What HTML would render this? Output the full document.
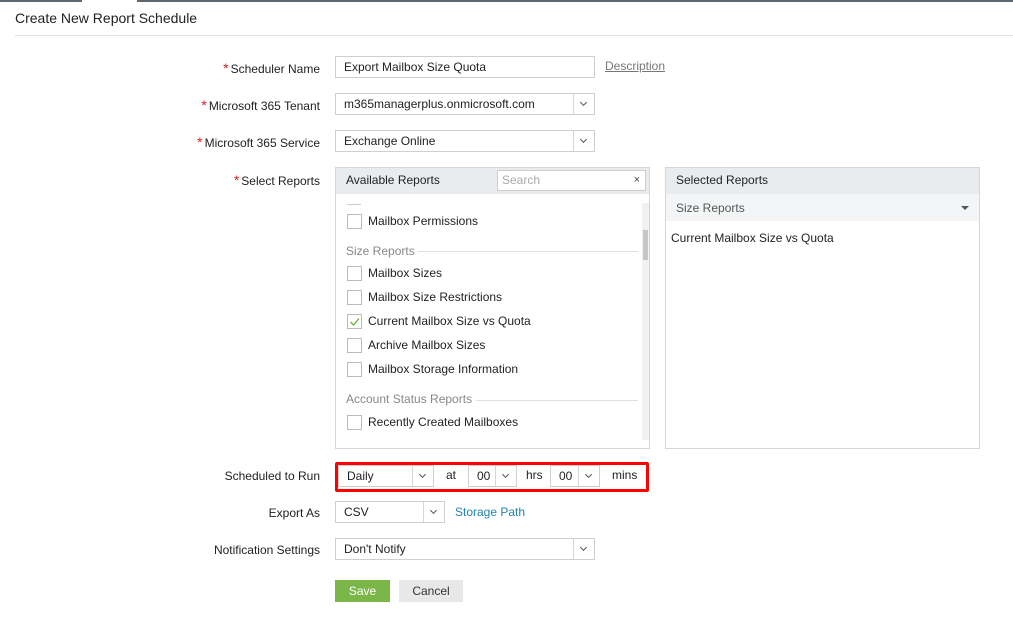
<!DOCTYPE html>
<html><head><style>
*{box-sizing:border-box;margin:0;padding:0}
body{width:1013px;height:629px;background:#fff;font-family:"Liberation Sans",sans-serif;font-size:12px;color:#222;position:relative;overflow:hidden}
.a{position:absolute}
.lbl{position:absolute;right:693px;white-space:nowrap;font-size:12px}
.lbl b{color:#e21b1b;font-weight:normal;font-size:14px;margin-right:2px}
.box{position:absolute;border:1px solid #cfcfcf;background:#fff;padding-left:8px;line-height:20px;font-size:12px}
.arr{position:absolute;right:0;top:0;bottom:0;width:21px;border-left:1px solid #d6d6d6}
.arr:after{content:"";position:absolute;left:7px;top:6px;width:4px;height:4px;border-right:1.3px solid #555;border-bottom:1.3px solid #555;transform:rotate(45deg)}
.cb{position:absolute;left:347px;width:15px;height:15px;border:1px solid #bbb;background:#fff}
.it{position:absolute;left:368px;font-size:12px}
.grp{position:absolute;left:346px;color:#888;font-size:12px}
</style></head><body>
<div class="a" style="left:0;top:0;width:82px;height:2px;background:#5c6770"></div>
<div class="a" style="left:137px;top:0;width:876px;height:2px;background:#5c6770"></div>
<div class="a" style="left:15px;top:10px;font-size:14px;color:#222">Create New Report Schedule</div>
<div class="a" style="left:15px;top:35px;width:998px;height:1px;background:#e3e3e3"></div>

<div class="lbl" style="top:60px"><b>*</b>Scheduler Name</div>
<div class="box" style="left:335px;top:56px;width:260px;height:22px">Export Mailbox Size Quota</div>
<div class="a" style="left:605px;top:59px;color:#777;text-decoration:underline;font-size:12px">Description</div>

<div class="lbl" style="top:97px"><b>*</b>Microsoft 365 Tenant</div>
<div class="box" style="left:335px;top:93px;width:260px;height:22px">m365managerplus.onmicrosoft.com<div class="arr"></div></div>

<div class="lbl" style="top:134px"><b>*</b>Microsoft 365 Service</div>
<div class="box" style="left:335px;top:130px;width:260px;height:22px">Exchange Online<div class="arr"></div></div>

<div class="lbl" style="top:172px"><b>*</b>Select Reports</div>

<div class="a" style="left:335px;top:167px;width:315px;height:282px;border:1px solid #d6d6d6"></div>
<div class="a" style="left:336px;top:168px;width:313px;height:26px;background:#e9ecef"></div>
<div class="a" style="left:346px;top:173px;font-size:12px">Available Reports</div>
<div class="a" style="left:497px;top:170px;width:149px;height:21px;border:1px solid #ccc;background:#fff;color:#aaa;padding-left:4px;line-height:19px">Search<span style="position:absolute;right:5px;color:#444;font-size:11px">×</span></div>
<div class="a" style="left:642px;top:203px;width:7px;height:237px;background:#f1f1f1"></div>
<div class="a" style="left:643px;top:230px;width:5px;height:30px;background:#c6c6c6"></div>
<div class="a" style="left:347px;top:204px;width:14px;height:1px;background:#ccc"></div>
<div class="cb" style="top:214px"></div><div class="it" style="top:214px">Mailbox Permissions</div>
<div class="grp" style="top:244px">Size Reports</div><div class="a" style="left:418px;top:251px;width:220px;height:1px;background:#e0e0e0"></div>
<div class="cb" style="top:266px"></div><div class="it" style="top:266px">Mailbox Sizes</div>
<div class="cb" style="top:290px"></div><div class="it" style="top:290px">Mailbox Size Restrictions</div>
<div class="cb" style="top:314px"><svg width="13" height="13" style="position:absolute;left:0;top:0"><path d="M2.5 7 L5.5 10 L11 3.5" fill="none" stroke="#6db33f" stroke-width="1.3"/></svg></div><div class="it" style="top:314px">Current Mailbox Size vs Quota</div>
<div class="cb" style="top:338px"></div><div class="it" style="top:338px">Archive Mailbox Sizes</div>
<div class="cb" style="top:362px"></div><div class="it" style="top:362px">Mailbox Storage Information</div>
<div class="grp" style="top:392px">Account Status Reports</div><div class="a" style="left:476px;top:400px;width:162px;height:1px;background:#e0e0e0"></div>
<div class="cb" style="top:415px"></div><div class="it" style="top:415px">Recently Created Mailboxes</div>

<div class="a" style="left:665px;top:167px;width:315px;height:282px;border:1px solid #d6d6d6"></div>
<div class="a" style="left:666px;top:168px;width:313px;height:26px;background:#e9ecef"></div>
<div class="a" style="left:676px;top:173px">Selected Reports</div>
<div class="a" style="left:666px;top:194px;width:313px;height:27px;background:#f4f5f6"></div>
<div class="a" style="left:676px;top:201px;color:#555">Size Reports</div>
<div class="a" style="left:961px;top:206px;width:0;height:0;border-left:4px solid transparent;border-right:4px solid transparent;border-top:4px solid #555"></div>
<div class="a" style="left:671px;top:231px">Current Mailbox Size vs Quota</div>

<div class="lbl" style="top:469px">Scheduled to Run</div>
<div class="a" style="left:335px;top:462px;width:314px;height:30px;border:3px solid #f00;border-radius:2px"></div>
<div class="box" style="left:338px;top:465px;width:96px;height:22px">Daily<div class="arr"></div></div>
<div class="a" style="left:446px;top:468px">at</div>
<div class="box" style="left:468px;top:465px;width:49px;height:22px">00<div class="arr"></div></div>
<div class="a" style="left:526px;top:468px">hrs</div>
<div class="box" style="left:550px;top:465px;width:50px;height:22px">00<div class="arr"></div></div>
<div class="a" style="left:612px;top:468px">mins</div>

<div class="lbl" style="top:506px">Export As</div>
<div class="box" style="left:335px;top:501px;width:110px;height:22px">CSV<div class="arr"></div></div>
<div class="a" style="left:455px;top:505px;color:#1f83b8">Storage Path</div>

<div class="lbl" style="top:543px">Notification Settings</div>
<div class="box" style="left:335px;top:538px;width:260px;height:22px">Don't Notify<div class="arr"></div></div>

<div class="a" style="left:335px;top:580px;width:55px;height:22px;background:#7ab648;color:#fff;text-align:center;line-height:22px">Save</div>
<div class="a" style="left:399px;top:580px;width:64px;height:22px;background:#e8e8e8;color:#333;text-align:center;line-height:22px">Cancel</div>
</body></html>
